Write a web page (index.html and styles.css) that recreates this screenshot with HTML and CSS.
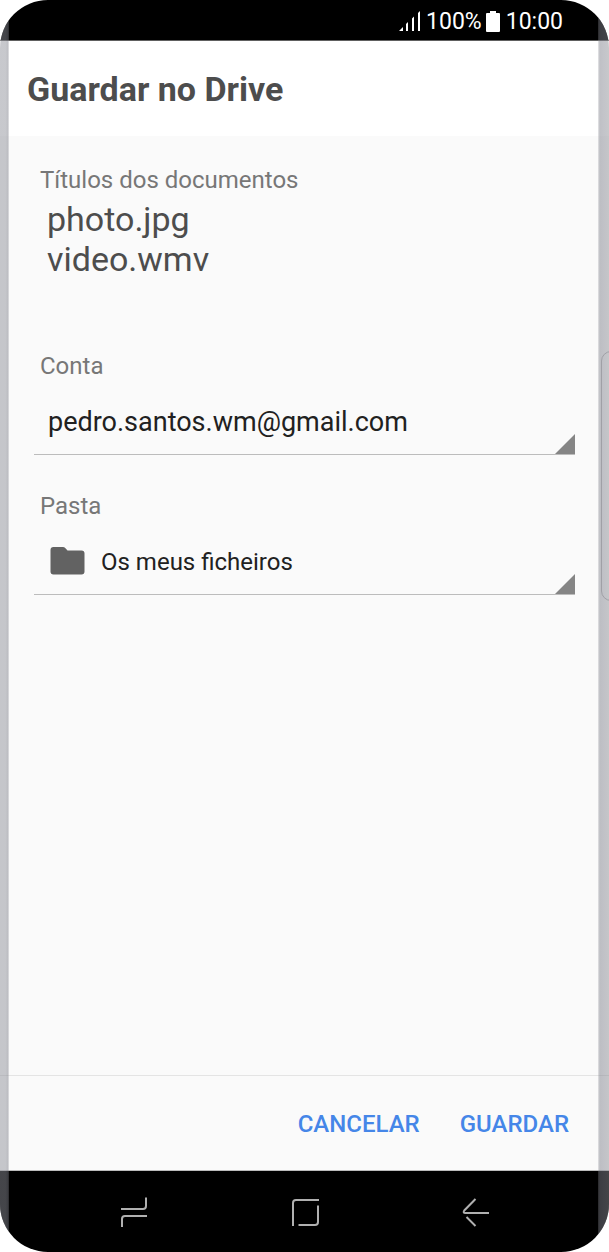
FILE: index.html
```html
<!DOCTYPE html>
<html lang="pt">
<head>
<meta charset="utf-8">
<meta name="viewport" content="width=device-width, initial-scale=1">
<title>Guardar no Drive</title>
<link rel="stylesheet" href="styles.css">
</head>
<body>
<div class="phone">
  <div class="status">
    <svg class="signal" width="22" height="22" viewBox="0 0 22 22" aria-hidden="true">
      <path d="M0 21l4-4v4zM7 14l2-2v9H7zM13 8.500l2-2V21h-2zM19 3l2-2v20h-2z" fill="#fff"/>
    </svg>
    <span class="percent">100%</span>
    <svg class="battery" width="14" height="21" viewBox="0 0 14 21" aria-hidden="true">
      <path d="M4 0h6v2h3q1 0 1 1v17q0 1-1 1H1q-1 0-1-1V3q0-1 1-1h3z" fill="#fff"/>
    </svg>
    <span class="clock">10:00</span>
  </div>

  <header class="header"><h1 class="title">Guardar no Drive</h1></header>

  <form class="form">
    <section class="documents">
      <h2 class="label" id="docs">Títulos dos documentos</h2>
      <ul class="files" aria-labelledby="docs">
        <li>photo.jpg</li>
        <li>video.wmv</li>
      </ul>
    </section>
    <div class="field">
      <label class="label" for="account">Conta</label>
      <div class="picker">
        <select class="select select-account" id="account"><option>pedro.santos.wm@gmail.com</option></select>
        <span class="corner"></span>
      </div>
    </div>
    <div class="field">
      <label class="label" for="folder">Pasta</label>
      <div class="picker">
        <svg class="folder" width="35" height="28" viewBox="0 0 35 28" aria-hidden="true">
          <path d="M3.500 0H13q1.200 0 2 .8L17.500 3.500H31.500q3 0 3 3V24.500q0 3-3 3H3.500q-3 0-3-3V3q0-3 3-3z" fill="#626262"/>
        </svg>
        <select class="select select-folder" id="folder"><option>Os meus ficheiros</option></select>
        <span class="corner"></span>
      </div>
    </div>
  </form>

  <footer class="actions">
    <button class="action" type="button">CANCELAR</button>
    <button class="action" type="button">GUARDAR</button>
  </footer>

  <nav class="nav">
    <button class="nav-button" type="button" aria-label="Recentes">
      <svg width="30" height="32" viewBox="0 0 30 32" fill="none" stroke="#b0b0b0" stroke-width="2"><path d="M2 13H24q3 0 3-3V1.500M28 20H6q-3 0-3 3V31"/></svg>
    </button>
    <button class="nav-button" type="button" aria-label="Início">
      <svg width="30" height="32" viewBox="0 0 30 32" fill="none" stroke="#b0b0b0" stroke-width="2"><path d="M3 30V7q0-3 3-3H29M28 9.500V26q0 3-3 3H8.500"/></svg>
    </button>
    <button class="nav-button" type="button" aria-label="Voltar">
      <svg width="30" height="32" viewBox="0 0 30 32" fill="none" stroke="#b0b0b0" stroke-width="2"><path d="M14.500 3L3.500 14.200q-2 2.800 1 2.800H28M5.500 21L14.500 30"/></svg>
    </button>
  </nav>

  <div class="edge edge-left"></div>
  <div class="edge edge-right"><span class="handle"></span></div>
</div>
</body>
</html>
```

FILE: styles.css
```css
* { box-sizing: border-box; }

body {
  margin: 0;
  background: #fff;
  font-family: Roboto, "Liberation Sans", sans-serif;
}

.phone {
  position: relative;
  display: flex;
  flex-direction: column;
  min-height: 100vh;
  overflow: hidden;
  border-radius: 48px;
  background: #fafafa;
}

.status {
  display: flex;
  align-items: center;
  justify-content: flex-end;
  height: 41px;
  padding: 2px 46px 0 0;
  border-bottom: 1px solid #606060;
  background: #000;
  color: #fff;
  font-size: 23px;
}

.signal { margin-right: 5px; }
.battery { margin: 0 6px 0 4px; }

.header {
  padding: 28px 27px 27px;
  background: #fff;
}

.title {
  margin: 0;
  color: #4d4d4d;
  font-size: 34px;
  line-height: 40px;
  font-weight: 700;
}

.form {
  flex: 1;
  padding: 28px 34px;
}

.label {
  display: block;
  margin: 0;
  padding-left: 6px;
  color: #777;
  font-size: 24px;
  line-height: 32px;
  font-weight: 400;
}

.files {
  margin: 3px 0 71px;
  padding: 0 0 0 13px;
  list-style: none;
  color: #4d4d4d;
  font-size: 34px;
  line-height: 40px;
}

.field { margin-bottom: 35px; }

.picker {
  position: relative;
  display: flex;
  align-items: center;
  height: 73px;
  padding: 0 0 0 14px;
  border-bottom: 1px solid #bcbcbc;
}

.folder { margin: 5px 16px 0 2px; }

.select {
  flex: 1;
  min-width: 0;
  height: 64px;
  padding: 8px 24px 0 0;
  border: 0;
  appearance: none;
  background: transparent;
  color: #212121;
  font-family: inherit;
}

.select-account { font-size: 27px; }
.select-folder { font-size: 24px; }

.corner {
  position: absolute;
  right: 0;
  bottom: 0;
  width: 20px;
  height: 20px;
  background: #858585;
  clip-path: polygon(100% 0, 100% 100%, 0 100%);
  pointer-events: none;
}

.actions {
  display: flex;
  justify-content: flex-end;
  gap: 40px;
  padding: 24px 40px 22px;
  border-top: 1px solid #e4e4e4;
  border-bottom: 1px solid #bbb;
}

.action {
  height: 48px;
  padding: 0;
  border: 0;
  background: none;
  color: #4586e8;
  font-family: inherit;
  font-size: 24px;
  font-weight: 500;
}

.nav {
  display: flex;
  align-items: center;
  justify-content: center;
  gap: 141px;
  height: 81px;
  background: #000;
}

.nav-button {
  display: flex;
  padding: 0;
  border: 0;
  background: none;
}

.edge {
  position: absolute;
  top: 0;
  bottom: 0;
  width: 9px;
  pointer-events: none;
}

.edge-left {
  left: 0;
  background: linear-gradient(90deg, #8d8f987c, #8d8f987c 60%, #7c7e887c 85%, #a0a0a840);
}

.edge-right {
  right: 0;
  width: 11px;
  background: linear-gradient(90deg, #a0a0a840, #7c7e887c 16%, #8385907c 50%, #8d8f947c);
}

.handle {
  position: absolute;
  top: 351px;
  left: 3px;
  width: 24px;
  height: 250px;
  border: 1px solid #a0a0a6;
  border-radius: 10px;
}
```
